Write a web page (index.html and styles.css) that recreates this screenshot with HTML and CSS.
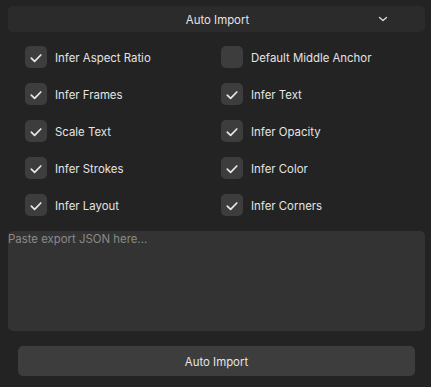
FILE: index.html
```html
<!DOCTYPE html>
<html lang="en">
<head>
  <meta charset="UTF-8">
  <title>Auto Import</title>
  <link rel="stylesheet" href="styles.css">
</head>
<body>
  <div class="panel">
    <div class="dropdown">
      <span class="dropdown-label">Auto Import</span>
      <svg class="chevron" width="10" height="6" viewBox="0 0 10 6">
        <path d="M1.5 1.5 L5 4.5 L8.5 1.5" fill="none" stroke="#dcdcdc" stroke-width="1.3" stroke-linecap="round" stroke-linejoin="round"/>
      </svg>
    </div>

    <div class="options">
      <label class="option"><span class="box checked"></span><span class="option-text">Infer Aspect Ratio</span></label>
      <label class="option"><span class="box"></span><span class="option-text">Default Middle Anchor</span></label>
      <label class="option"><span class="box checked"></span><span class="option-text">Infer Frames</span></label>
      <label class="option"><span class="box checked"></span><span class="option-text">Infer Text</span></label>
      <label class="option"><span class="box checked"></span><span class="option-text">Scale Text</span></label>
      <label class="option"><span class="box checked"></span><span class="option-text">Infer Opacity</span></label>
      <label class="option"><span class="box checked"></span><span class="option-text">Infer Strokes</span></label>
      <label class="option"><span class="box checked"></span><span class="option-text">Infer Color</span></label>
      <label class="option"><span class="box checked"></span><span class="option-text">Infer Layout</span></label>
      <label class="option"><span class="box checked"></span><span class="option-text">Infer Corners</span></label>
    </div>

    <textarea class="json-input" placeholder="Paste export JSON here..."></textarea>

    <button class="import-button">Auto Import</button>
  </div>
</body>
</html>
```

FILE: styles.css
```css
* {
  margin: 0;
  padding: 0;
  box-sizing: border-box;
  font-family: 'Inter', 'Noto Sans', sans-serif;
}

:root {
  --bg: #232323;
  --dropdown-bg: #2b2b2b;
  --box-bg: #3d3d3d;
  --field-bg: #333333;
  --button-bg: #3d3d3d;
  --text: #e4e4e4;
  --placeholder: #8a8a8a;
}

body {
  background-color: var(--bg);
  color: var(--text);
  width: 431px;
  height: 387px;
  overflow: hidden;
  font-size: 11.4px;
}

.panel {
  display: flex;
  flex-direction: column;
  padding: 6px 6px 0 8px;
}

.dropdown {
  position: relative;
  height: 26px;
  background-color: var(--dropdown-bg);
  border-radius: 5px;
  display: flex;
  align-items: center;
  justify-content: center;
}

.dropdown-label {
  margin-left: 2px;
  padding-top: 2px;
}

.chevron {
  position: absolute;
  right: 37px;
  top: 10px;
}

.options {
  display: grid;
  grid-template-columns: 196px 196px;
  row-gap: 15px;
  padding-left: 17px;
  margin-top: 14px;
}

.option {
  display: flex;
  align-items: center;
  height: 22px;
  gap: 8px;
}

.option-text {
  padding-top: 2px;
}

.box {
  width: 22px;
  height: 22px;
  border-radius: 5px;
  background-color: var(--box-bg);
  flex-shrink: 0;
}

.box.checked {
  background-image: url("data:image/svg+xml,%3Csvg xmlns='http://www.w3.org/2000/svg' width='22' height='22'%3E%3Cpath d='M6.3 12.2 L9.6 15.3 L15.8 9' fill='none' stroke='%23e8e8e8' stroke-width='1.7' stroke-linecap='round' stroke-linejoin='round'/%3E%3C/svg%3E");
}

.json-input {
  margin-top: 15px;
  height: 100px;
  background-color: var(--field-bg);
  border: none;
  border-radius: 5px;
  color: var(--text);
  font-size: 11.4px;
  padding: 1px 0 0 0;
  resize: none;
  outline: none;
}

.json-input::placeholder {
  color: var(--placeholder);
}

.import-button {
  margin: 15px 10px 0 10px;
  height: 30px;
  padding-top: 2px;
  background-color: var(--button-bg);
  color: var(--text);
  border: none;
  border-radius: 5px;
  font-size: 11.4px;
}
```
